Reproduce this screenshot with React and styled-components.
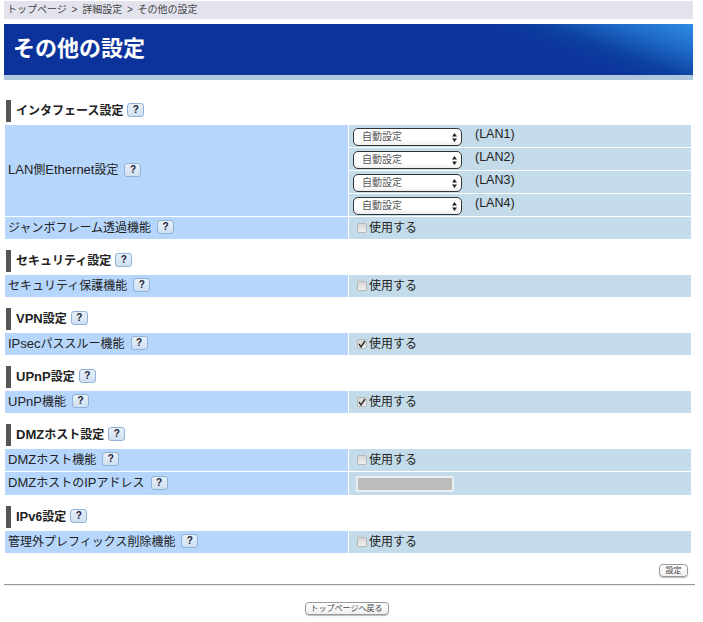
import React from 'react';
import styled, { createGlobalStyle } from 'styled-components';

const Global = createGlobalStyle`
  html, body {
    margin: 0;
    padding: 0;
    background: #fff;
  }
  body {
    font-family: "Liberation Sans", "Noto Sans CJK JP", sans-serif;
    font-size: 12px;
    color: #222;
  }
`;

const Page = styled.div`
  width: 703px;
  height: 622px;
  overflow: hidden;
  padding-top: 1px;
  box-sizing: border-box;
`;

const Crumb = styled.div`
  margin: 0 10px 0 4px;
  height: 18px;
  line-height: 18px;
  padding-left: 3px;
  background: #e3e3ee;
  font-size: 10px;
  word-spacing: 2px;
  color: #444;
`;

const Banner = styled.div`
  margin: 5px 10px 0 4px;
  height: 51px;
  border-bottom: 5px solid #b0c8de;
  background:
    linear-gradient(200deg, #2f8ce6 0%, #1f6cc8 9%, #0c3fa0 19%, rgba(12, 51, 156, 0) 26%),
    #0c339c;
  color: #fff;
  font-size: 22px;
  font-weight: bold;
  line-height: 49px;
  padding-left: 9px;
`;

const Content = styled.div`
  margin: 20px 12px 0 5px;
`;

const Section = styled.section`
  margin-bottom: 11px;
`;

const Heading = styled.h2`
  display: flex;
  align-items: center;
  gap: 4px;
  box-sizing: border-box;
  margin: 0 0 3px 1px;
  height: 22px;
  padding: 0 0 2px 5px;
  border-left: 5px solid #555;
  font-size: 12px;
  font-weight: bold;
  color: #222;
`;

// sits 1px above the help badge and checkbox beside it
const Text = styled.span`
  margin-bottom: 2px;
`;

const Latin = styled.span`
  font-size: 13px;
`;

const Help = styled.span`
  display: inline-block;
  width: 17px;
  height: 14px;
  line-height: 12px;
  box-sizing: border-box;
  margin-left: ${(p) => p.$gap || 0}px;
  border: 1px solid #8fb2d8;
  border-radius: 3px;
  background: linear-gradient(#e8f0f8, #cfe0f2);
  color: #223;
  font-size: 10px;
  font-weight: bold;
  text-align: center;
`;

const Row = styled.div`
  display: grid;
  grid-template-columns: 343px 1fr;
  column-gap: 1px;
  min-height: ${(p) => p.$height || 22}px;
  & + & {
    margin-top: 1px;
  }
`;

const Label = styled.div`
  display: flex;
  align-items: center;
  padding: 0 0 2px 3px;
  background: #b6d6fc;
  font-size: 12px;
`;

const Value = styled.div`
  display: flex;
  align-items: center;
  background: #c4dbe9;
  padding: 0 0 2px 7px;
  font-size: 12px;
`;

const LanList = styled.div`
  display: flex;
  flex-direction: column;
  gap: 1px;
`;

const LanRow = styled.div`
  display: flex;
  align-items: center;
  height: 22px;
  padding-left: 4px;
  background: #c4dbe9;
`;

const FakeSelect = styled.div`
  display: flex;
  align-items: center;
  justify-content: space-between;
  flex-shrink: 0;
  box-sizing: border-box;
  width: 109px;
  height: 18px;
  margin-top: 2px;
  padding: 0 4px 3px 8px;
  border: 1px solid #333;
  border-radius: 5px;
  background: linear-gradient(#fff, #fff 70%, #eee);
  font-size: 10px;
  color: #555;
`;

const Arrows = styled.svg`
  width: 5px;
  height: 9px;
  margin-top: 3px;
  fill: #222;
`;

const LanName = styled.span`
  margin-left: 13px;
  margin-top: -5px;
  font-size: 12.5px;
`;

const Check = styled.span`
  display: inline-flex;
  align-items: center;
  justify-content: center;
  box-sizing: border-box;
  width: 10px;
  height: 10px;
  margin: 1px 2px 0 1px;
  border: 1px solid #b8b8b8;
  border-radius: 2px;
  background: linear-gradient(#d6d6d6, #efefef);
`;

const DisabledInput = styled.div`
  box-sizing: border-box;
  width: 98px;
  height: 16px;
  margin-top: 2px;
  border: 2px solid #e8eef2;
  background: #bcbcbc;
`;

const SubmitRow = styled.div`
  display: flex;
  justify-content: flex-end;
  margin: 1px 3px 0 0;
`;

const SmallButton = styled.button`
  box-sizing: border-box;
  height: 13px;
  width: ${(p) => p.$width}px;
  padding: 0;
  border: 1px solid #999;
  border-radius: 4px;
  background: linear-gradient(#fff, #f0f0f0);
  box-shadow: 0 1px 1px #bbb;
  font-family: inherit;
  font-size: 8px;
  line-height: 11px;
  color: #444;
`;

const Rule = styled.hr`
  margin: 7px 8px 0 4px;
  border: 0;
  border-top: 1px solid #999;
  border-bottom: 1px solid #eee;
`;

const BackRow = styled.div`
  display: flex;
  justify-content: center;
  margin: 16px 0 0 -10px;
`;

const lans = ['LAN1', 'LAN2', 'LAN3', 'LAN4'];

// latin runs sit a little larger than the kana next to them
const Mixed = ({ text }) =>
  text.split(/([A-Za-z]+)/).map((part, i) =>
    /[A-Za-z]/.test(part) ? <Latin key={i}>{part}</Latin> : part
  );

const Checkbox = ({ checked }) => (
  <Check>
    {checked && (
      <svg width="8" height="8" viewBox="0 0 8 8">
        <path d="M1 4l2 3 4-6" fill="none" stroke="#333" strokeWidth="1.5" />
      </svg>
    )}
  </Check>
);

const Use = ({ checked }) => (
  <Value>
    <Checkbox checked={checked} />
    <Text>使用する</Text>
  </Value>
);

const Title = ({ text }) => (
  <Heading>
    <Text>
      <Mixed text={text} />
    </Text>
    <Help>?</Help>
  </Heading>
);

const Name = ({ text }) => (
  <Label>
    <Text>
      <Mixed text={text} />
    </Text>
    <Help $gap={6}>?</Help>
  </Label>
);

export default function App() {
  return (
    <Page>
      <Global />
      <Crumb>トップページ &gt; 詳細設定 &gt; その他の設定</Crumb>
      <Banner>その他の設定</Banner>
      <Content>
        <Section>
          <Title text="インタフェース設定" />
          <Row>
            <Name text="LAN側Ethernet設定" />
            <LanList>
              {lans.map((lan) => (
                <LanRow key={lan}>
                  <FakeSelect>
                    自動設定
                    <Arrows viewBox="0 0 5 9">
                      <path d="M2.5 0L5 3.5H0zM2.5 9L0 5.5h5z" />
                    </Arrows>
                  </FakeSelect>
                  <LanName>({lan})</LanName>
                </LanRow>
              ))}
            </LanList>
          </Row>
          <Row>
            <Name text="ジャンボフレーム透過機能" />
            <Use />
          </Row>
        </Section>
        <Section>
          <Title text="セキュリティ設定" />
          <Row>
            <Name text="セキュリティ保護機能" />
            <Use />
          </Row>
        </Section>
        <Section>
          <Title text="VPN設定" />
          <Row>
            <Name text="IPsecパススルー機能" />
            <Use checked />
          </Row>
        </Section>
        <Section>
          <Title text="UPnP設定" />
          <Row>
            <Name text="UPnP機能" />
            <Use checked />
          </Row>
        </Section>
        <Section>
          <Title text="DMZホスト設定" />
          <Row>
            <Name text="DMZホスト機能" />
            <Use />
          </Row>
          <Row $height={23}>
            <Name text="DMZホストのIPアドレス" />
            <Value>
              <DisabledInput />
            </Value>
          </Row>
        </Section>
        <Section>
          <Title text="IPv6設定" />
          <Row>
            <Name text="管理外プレフィックス削除機能" />
            <Use />
          </Row>
        </Section>
        <SubmitRow>
          <SmallButton $width={29}>設定</SmallButton>
        </SubmitRow>
      </Content>
      <Rule />
      <BackRow>
        <SmallButton $width={84}>トップページへ戻る</SmallButton>
      </BackRow>
    </Page>
  );
}
